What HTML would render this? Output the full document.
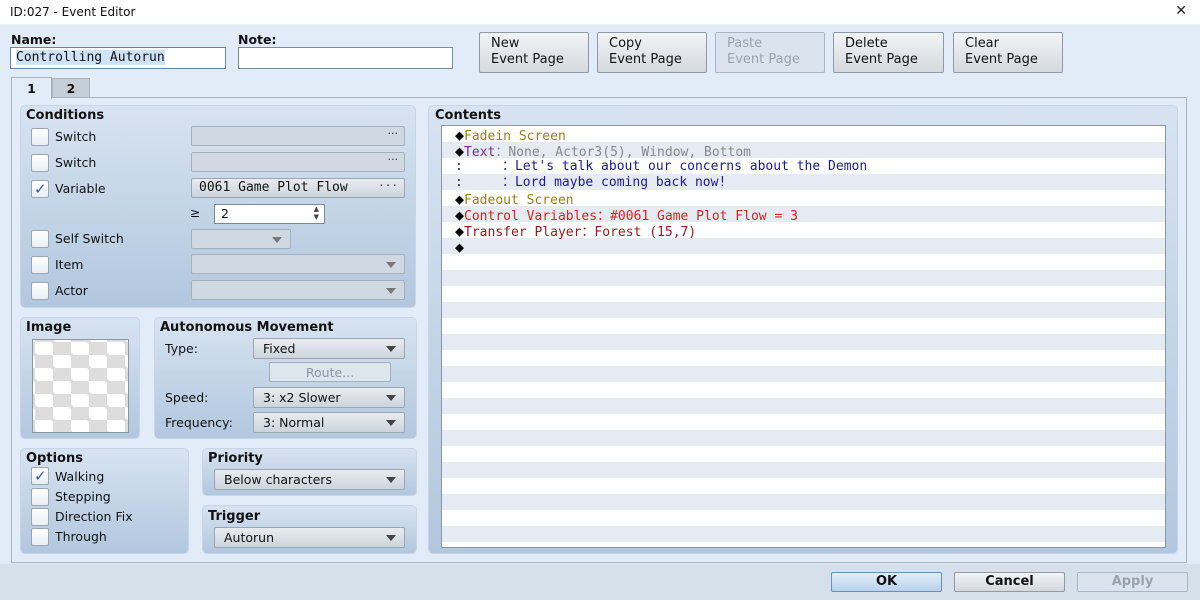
<!DOCTYPE html>
<html><head><style>
*{box-sizing:border-box;margin:0;padding:0}
body{width:1200px;height:600px;overflow:hidden;background:#e2ecf8;font-family:"DejaVu Sans","Liberation Sans",sans-serif;font-size:12.5px;color:#111;position:relative}
.a{position:absolute}
.title{left:0;top:0;width:1200px;height:25px;background:#fff;font-size:12px;padding:5px 0 0 10px;border-bottom:1px solid #e8eef5}
.lbl{font-weight:bold}
.inp{background:#fff;border:1px solid #7a8a9a}
.btn{background:linear-gradient(#f2f4f6,#d4d9de);border:1px solid #8e9aa6;border-radius:2px;font-size:13px;line-height:16px;padding:3px 0 0 11px}
.btn.dis{background:#dbe4ee;color:#9aa3ad;border-color:#a9b5c2}
.grp{border:1px solid #c7d6e6;border-radius:5px;background:linear-gradient(#d7e3f1,#b2c7de)}
.gt{font-weight:bold;font-size:13px}
.cb{width:18px;height:18px;background:linear-gradient(#fff,#e9eef3);border:1px solid #9aa6b2;border-radius:2px}
.fld{background:linear-gradient(#e8ecf0,#ccd4dc);border:1px solid #9aa6b2;border-radius:2px}
.fld.e{background:#d0d9e2;border-color:#a4b0bc}
.dd{position:absolute;right:8px;top:7px;width:0;height:0;border-left:5px solid transparent;border-right:5px solid transparent;border-top:6px solid #444}
.dots{position:absolute;right:6px;top:0;font-size:11px;color:#333}
.row{position:absolute;left:0;width:722px;height:16px;font-family:"DejaVu Sans Mono","Liberation Mono",monospace;font-size:13px;line-height:16px;padding-left:13px;white-space:pre}
.row b{font-size:15px;font-weight:normal;color:#000}
.chk{color:#2a5db0;font-weight:bold;font-size:15px;line-height:16px;padding-left:2px}
</style></head><body>
<div class="a title">ID:027 - Event Editor</div>
<div class="a" style="right:13px;top:3px;font-size:14px;color:#222;font-weight:100">✕</div>

<div class="a lbl" style="left:11px;top:32px">Name:</div>
<div class="a lbl" style="left:238px;top:32px">Note:</div>
<div class="a inp" style="left:10px;top:47px;width:216px;height:22px;border-color:#5b86b8;padding:2px 5px;font-family:'DejaVu Sans Mono',monospace;font-size:13px"><span style="background:#cfe3f7">Controlling Autorun</span></div>
<div class="a inp" style="left:238px;top:47px;width:215px;height:22px"></div>

<div class="a btn" style="left:479px;top:32px;width:110px;height:41px">New<br>Event Page</div>
<div class="a btn" style="left:597px;top:32px;width:110px;height:41px">Copy<br>Event Page</div>
<div class="a btn dis" style="left:715px;top:32px;width:110px;height:41px">Paste<br>Event Page</div>
<div class="a btn" style="left:833px;top:32px;width:111px;height:41px">Delete<br>Event Page</div>
<div class="a btn" style="left:953px;top:32px;width:110px;height:41px">Clear<br>Event Page</div>

<div class="a" style="left:11px;top:97px;width:1176px;height:466px;border:1px solid #a8b4c0;background:#e2ecf8"></div>
<div class="a" style="left:0;top:564px;width:1200px;height:36px;background:#d6e0ea"></div>
<div class="a" style="left:11px;top:77px;width:41px;height:22px;background:#e2ecf8;border:1px solid #a8b4c0;border-bottom:none;font-weight:bold;text-align:center;padding-top:3px">1</div>
<div class="a" style="left:52px;top:78px;width:38px;height:20px;background:#c6ced7;border:1px solid #a8b4c0;font-weight:bold;text-align:center;padding-top:2px">2</div>

<!-- Conditions -->
<div class="a grp" style="left:20px;top:105px;width:396px;height:203px"></div>
<div class="a gt" style="left:26px;top:108px">Conditions</div>
<div class="a cb" style="left:31px;top:128px"></div><div class="a" style="left:55px;top:129px">Switch</div>
<div class="a fld e" style="left:191px;top:126px;width:214px;height:20px"><span class="dots">···</span></div>
<div class="a cb" style="left:31px;top:154px"></div><div class="a" style="left:55px;top:155px">Switch</div>
<div class="a fld e" style="left:191px;top:152px;width:214px;height:20px"><span class="dots">···</span></div>
<div class="a cb chk" style="left:31px;top:180px">✓</div><div class="a" style="left:55px;top:181px">Variable</div>
<div class="a fld" style="left:191px;top:178px;width:214px;height:20px;padding:1px 7px;font-family:'DejaVu Sans Mono',monospace;font-size:13px">0061 Game Plot Flow<span class="dots">···</span></div>
<div class="a" style="left:190px;top:205px">≥</div>
<div class="a inp" style="left:214px;top:204px;width:111px;height:20px;padding:1px 6px">2<span style="position:absolute;right:5px;top:0;font-size:7px;line-height:8px;color:#444">▲<br>▼</span></div>
<div class="a cb" style="left:31px;top:230px"></div><div class="a" style="left:55px;top:231px">Self Switch</div>
<div class="a fld e" style="left:191px;top:229px;width:100px;height:20px"><span class="dd" style="border-top-color:#777"></span></div>
<div class="a cb" style="left:31px;top:256px"></div><div class="a" style="left:55px;top:257px">Item</div>
<div class="a fld e" style="left:191px;top:254px;width:214px;height:20px"><span class="dd" style="border-top-color:#777"></span></div>
<div class="a cb" style="left:31px;top:282px"></div><div class="a" style="left:55px;top:283px">Actor</div>
<div class="a fld e" style="left:191px;top:280px;width:214px;height:20px"><span class="dd" style="border-top-color:#777"></span></div>

<!-- Image -->
<div class="a grp" style="left:20px;top:317px;width:120px;height:122px"></div>
<div class="a gt" style="left:26px;top:320px">Image</div>
<div class="a" style="left:32px;top:339px;width:97px;height:94px;border:1px solid #8a96a2;background-color:#fff;background-image:linear-gradient(45deg,#ddd 25%,transparent 25%,transparent 75%,#ddd 75%),linear-gradient(45deg,#ddd 25%,transparent 25%,transparent 75%,#ddd 75%);background-size:36px 26px;background-position:2px 2px,20px 15px"></div>

<!-- Autonomous -->
<div class="a grp" style="left:154px;top:317px;width:263px;height:122px"></div>
<div class="a gt" style="left:160px;top:320px">Autonomous Movement</div>
<div class="a" style="left:165px;top:341px">Type:</div>
<div class="a fld" style="left:253px;top:338px;width:152px;height:21px;padding:2px 9px">Fixed<span class="dd"></span></div>
<div class="a fld e" style="left:269px;top:362px;width:122px;height:20px;text-align:center;color:#8c96a0;padding-top:2px;background:#dde5ed">Route...</div>
<div class="a" style="left:165px;top:390px">Speed:</div>
<div class="a fld" style="left:253px;top:387px;width:152px;height:21px;padding:2px 9px">3: x2 Slower<span class="dd"></span></div>
<div class="a" style="left:165px;top:415px">Frequency:</div>
<div class="a fld" style="left:253px;top:412px;width:152px;height:21px;padding:2px 9px">3: Normal<span class="dd"></span></div>

<!-- Options -->
<div class="a grp" style="left:20px;top:448px;width:169px;height:106px"></div>
<div class="a gt" style="left:26px;top:451px">Options</div>
<div class="a cb chk" style="left:31px;top:467px">✓</div><div class="a" style="left:55px;top:469px">Walking</div>
<div class="a cb" style="left:31px;top:488px"></div><div class="a" style="left:55px;top:489px">Stepping</div>
<div class="a cb" style="left:31px;top:508px"></div><div class="a" style="left:55px;top:509px">Direction Fix</div>
<div class="a cb" style="left:31px;top:528px"></div><div class="a" style="left:55px;top:529px">Through</div>

<!-- Priority / Trigger -->
<div class="a grp" style="left:202px;top:448px;width:215px;height:48px"></div>
<div class="a gt" style="left:208px;top:451px">Priority</div>
<div class="a fld" style="left:214px;top:469px;width:191px;height:21px;padding:2px 9px">Below characters<span class="dd"></span></div>
<div class="a grp" style="left:202px;top:505px;width:215px;height:49px"></div>
<div class="a gt" style="left:208px;top:509px">Trigger</div>
<div class="a fld" style="left:214px;top:527px;width:191px;height:21px;padding:2px 9px">Autorun<span class="dd"></span></div>

<!-- Contents -->
<div class="a grp" style="left:428px;top:105px;width:750px;height:449px"></div>
<div class="a gt" style="left:435px;top:108px">Contents</div>
<div class="a" style="left:441px;top:125px;width:725px;height:423px;border:1px solid #8a96a2;overflow:hidden;background:repeating-linear-gradient(#fff 0 16px,#e5ebf2 16px 32px)">
<div class="row" style="top:1px"><b>◆</b><span style="color:#a08010">Fadein Screen</span></div>
<div class="row" style="top:17px"><b>◆</b><span style="color:#7a2aa0">Text</span><span style="color:#888">：None, Actor3(5), Window, Bottom</span></div>
<div class="row" style="top:33px"><span style="color:#333">:     </span><span style="color:#1a1aa0">：Let's talk about our concerns about the Demon</span></div>
<div class="row" style="top:49px"><span style="color:#333">:     </span><span style="color:#1a1aa0">：Lord maybe coming back now!</span></div>
<div class="row" style="top:65px"><b>◆</b><span style="color:#a08010">Fadeout Screen</span></div>
<div class="row" style="top:81px;color:#e02020"><b>◆</b>Control Variables：#0061 Game Plot Flow = 3</div>
<div class="row" style="top:97px;color:#a01818"><b>◆</b>Transfer Player：Forest (15,7)</div>
<div class="row" style="top:113px"><b>◆</b></div>
</div>

<!-- bottom buttons -->
<div class="a btn" style="left:831px;top:572px;width:111px;height:20px;padding:1px 0 0;text-align:center;background:linear-gradient(#e3eefa,#b8d2ec);border-color:#6e8fb4;font-weight:bold">OK</div>
<div class="a btn" style="left:954px;top:572px;width:111px;height:20px;padding:1px 0 0;text-align:center;font-weight:bold">Cancel</div>
<div class="a btn dis" style="left:1077px;top:572px;width:111px;height:20px;padding:1px 0 0;text-align:center;font-weight:bold">Apply</div>
</body></html>
